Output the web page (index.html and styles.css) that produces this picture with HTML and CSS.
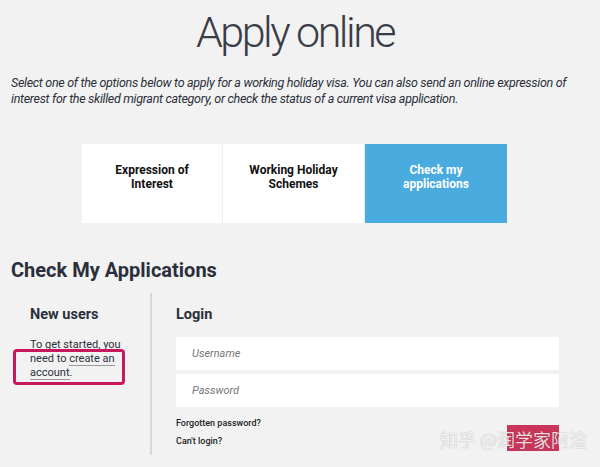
FILE: index.html
```html
<!DOCTYPE html>
<html lang="en">
<head>
    <meta charset="UTF-8" />
    <meta name="viewport" content="width=device-width, initial-scale=1" />
    <title>Apply online</title>
    <link rel="stylesheet" href="styles.css">
</head>
<body>
    <h1 class="page-title">Apply online</h1>
    <p class="intro">Select one of the options below to apply for a working holiday visa. You can also send an online expression of interest for the skilled migrant category, or check the status of a current visa application.</p>

    <div class="tabs">
        <a class="tab" href="#">Expression of<br>Interest</a>
        <a class="tab" href="#">Working Holiday<br>Schemes</a>
        <a class="tab tab-active" href="#">Check my<br>applications</a>
    </div>

    <h2 class="section-title">Check My Applications</h2>

    <div class="panel">
        <div class="new-users">
            <h3>New users</h3>
            <p>To get started, you need to <a href="#">create an account</a>.</p>
        </div>
        <form class="login">
            <h3>Login</h3>
            <input type="text" placeholder="Username" />
            <input type="password" placeholder="Password" />
            <div class="login-foot">
                <div class="links">
                    <a href="#">Forgotten password?</a>
                    <a href="#">Can't login?</a>
                </div>
                <button type="submit" aria-label="Login"></button>
            </div>
        </form>
    </div>

    <div class="watermark">知乎 @润学家阿淦</div>
</body>
</html>
```

FILE: styles.css
```css
body {
    margin: 0;
    background-color: #f2f2f2;
    font-family: Roboto, "Noto Sans", sans-serif;
    color: #2b2f3a;
    position: relative;
    height: 467px;
    overflow: hidden;
}
.page-title {
    margin: 0;
    padding: 6px 10px 0 0;
    text-align: center;
    font-size: 43px;
    font-weight: 300;
    letter-spacing: -2.5px;
    line-height: 52px;
    color: #3a3d48;
}
.intro {
    margin: 17px 11px 0;
    font-size: 12.5px;
    font-style: italic;
    letter-spacing: -0.3px;
    line-height: 16px;
    color: #2b2f3a;
}
.tabs {
    display: grid;
    grid-template-columns: 141px 142px 142px;
    width: 425px;
    height: 79px;
    margin: 37px 0 0 82px;
}
.tab {
    background: white;
    border-right: 1px solid #eee;
    text-align: center;
    padding-top: 19px;
    font-size: 12px;
    font-weight: 700;
    line-height: 14px;
    color: #111;
    text-decoration: none;
}
.tab-active {
    background: #4aabde;
    color: white;
    border-right: none;
}
.section-title {
    margin: 36px 0 0 11px;
    font-size: 20px;
    font-weight: 700;
    line-height: 22px;
    color: #2b2f3a;
}
.panel {
    display: flex;
    margin-top: 12px;
}
.new-users {
    width: 120px;
    padding: 14px 0 0 30px;
    border-right: 2px solid #d8d8d8;
    height: 148px;
}
h3 {
    margin: 0;
    font-size: 14.5px;
    font-weight: 700;
    line-height: 16px;
    color: #2b2f3a;
}
.new-users p {
    position: relative;
    margin: 15px 0 0;
    font-size: 11px;
    line-height: 14px;
    width: 96px;
    color: #2b2f3a;
}
.new-users p::after {
    content: "";
    position: absolute;
    left: -17px;
    top: 11px;
    width: 106px;
    height: 30px;
    border: 3px solid #c8175d;
    border-radius: 4px;
}
.new-users a {
    color: #2b2f3a;
    text-decoration: none;
    border-bottom: 1px solid #999;
}
.login {
    width: 383px;
    padding: 14px 0 0 24px;
}
.login input {
    display: block;
    width: 100%;
    box-sizing: border-box;
    height: 33px;
    margin-top: 4px;
    border: none;
    background: white;
    padding: 0 16px;
    font-family: inherit;
    font-size: 11px;
    font-style: italic;
}
.login h3 {
    margin-bottom: 14px;
}
.login input::placeholder {
    color: #777;
}
.login-foot {
    display: flex;
    justify-content: space-between;
    margin-top: 7px;
}
.links a {
    display: block;
    font-size: 9px;
    font-weight: 500;
    line-height: 18px;
    color: #222;
    text-decoration: none;
}
button {
    margin-top: 11px;
    width: 52px;
    height: 26px;
    border: none;
    background: #c93659;
}
.watermark {
    position: absolute;
    left: 440px;
    top: 426px;
    white-space: nowrap;
    font-family: "Noto Sans CJK SC", sans-serif;
    font-size: 18px;
    color: rgba(255, 255, 255, 0.85);
    text-shadow: 0 0 1px rgba(0, 0, 0, 0.35);
}
```
